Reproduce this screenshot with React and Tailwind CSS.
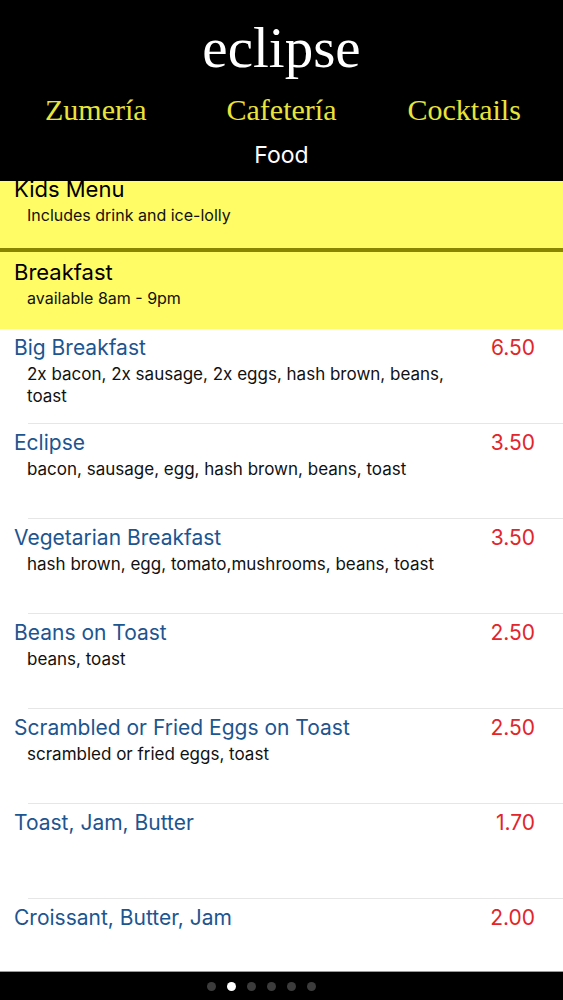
import React from "react";

const items = [
  { name: "Big Breakfast", desc: "2x bacon, 2x sausage, 2x eggs, hash brown, beans, toast", price: "6.50" },
  { name: "Eclipse", desc: "bacon, sausage, egg, hash brown, beans, toast", price: "3.50" },
  { name: "Vegetarian Breakfast", desc: "hash brown, egg, tomato,mushrooms, beans, toast", price: "3.50" },
  { name: "Beans on Toast", desc: "beans, toast", price: "2.50" },
  { name: "Scrambled or Fried Eggs on Toast", desc: "scrambled or fried eggs, toast", price: "2.50" },
  { name: "Toast, Jam, Butter", desc: "", price: "1.70" },
  { name: "Croissant, Butter, Jam", desc: "", price: "2.00" },
];

const serif = { fontFamily: '"Liberation Serif", "DejaVu Serif", serif' };

function Section({ title, sub, className }) {
  return (
    <div className={"bg-[#fffc66] pl-[14px] pt-[7px] " + className}>
      <div className="text-[22px] leading-[26px] text-black">{title}</div>
      <div className="text-[16px] leading-[20px] text-[#111] pl-[13px] pt-[3px]">{sub}</div>
    </div>
  );
}

export default function App() {
  return (
    <div className="w-[563px] h-[1000px] flex flex-col bg-white overflow-hidden" style={{ fontFamily: 'Inter, "Noto Sans", sans-serif' }}>
      <header className="bg-black h-[181px] shrink-0 flex flex-col items-center z-10">
        <div className="text-white text-[57px] leading-[60px] mt-[18px]" style={serif}>eclipse</div>
        <div className="w-full grid grid-cols-3 text-[#e9e43a] text-[30px] leading-[34px] mt-[15px]" style={serif}>
          <div className="text-center pl-[4px]">Zumería</div>
          <div className="text-center">Cafetería</div>
          <div className="text-center pr-[10px]">Cocktails</div>
        </div>
        <div className="text-white text-[23px] leading-[28px] mt-[14px]">Food</div>
      </header>
      <main className="flex-1 overflow-hidden">
        <Section title="Kids Menu" sub="Includes drink and ice-lolly" className="-mt-[12px] h-[79px]" />
        <div className="h-[4px] bg-[#8a8500]" />
        <Section title="Breakfast" sub="available 8am - 9pm" className="h-[77px]" />
        {items.map((it, i) => (
          <div key={it.name}>
            {i > 0 && <div className="ml-[28px] h-px bg-[#e6e6e6]" />}
            <div className="h-[94px] pl-[14px] pr-[28px] pt-[6px]">
              <div className="flex justify-between items-start">
                <div className="text-[21px] leading-[26px] text-[#1d5590]">{it.name}</div>
                <div className="text-[21px] leading-[26px] text-[#e2252b]">{it.price}</div>
              </div>
              {it.desc && (
                <div className="text-[17px] leading-[22px] text-[#111] pl-[13px] pt-[2px] w-[460px]">{it.desc}</div>
              )}
            </div>
          </div>
        ))}
      </main>
      <footer className="h-[29px] shrink-0 border-t border-[#9a9a9a] bg-black flex items-center justify-center gap-[11px] pr-[40px]">
        {[0, 1, 2, 3, 4, 5].map((d) => (
          <span key={d} className={"w-[9px] h-[9px] rounded-full " + (d === 1 ? "bg-white" : "bg-[#3c3c3c]")} />
        ))}
      </footer>
    </div>
  );
}
